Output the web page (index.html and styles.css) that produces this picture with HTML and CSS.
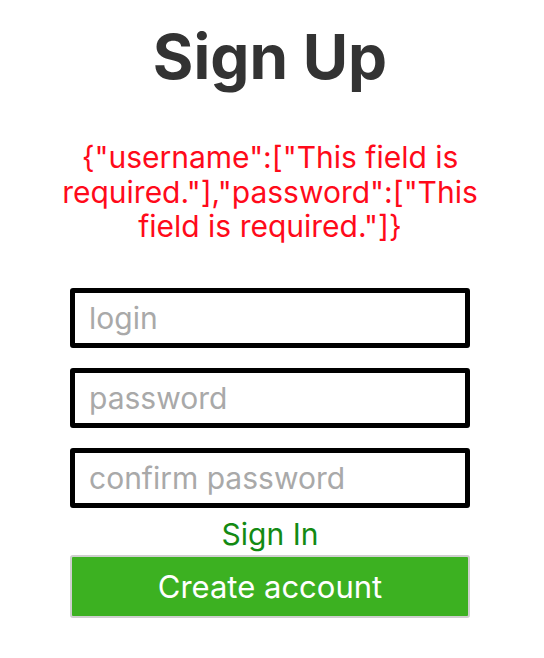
FILE: index.html
```html
<!DOCTYPE html>
<html>
<head>
<meta charset="utf-8">
<link rel="stylesheet" href="styles.css">
</head>
<body>
<div class="page">
  <h1 class="title">Sign Up</h1>
  <p class="error">{"username":["This field is required."],"password":["This field is required."]}</p>
  <form class="form">
    <input class="field" type="text" placeholder="login">
    <input class="field" type="password" placeholder="password">
    <input class="field" type="password" placeholder="confirm password">
    <a class="signin" href="#">Sign In</a>
    <button class="submit" type="button">Create account</button>
  </form>
</div>
</body>
</html>
```

FILE: styles.css
```css
html, body {
  margin: 0;
  padding: 0;
  background: #fff;
}
body {
  font-family: Inter, "Noto Sans", sans-serif;
}
.page {
  width: 540px;
  display: flex;
  flex-direction: column;
  align-items: center;
}
.title {
  margin: 22px 0 0;
  font-size: 62px;
  line-height: 70px;
  font-weight: 700;
  color: #333;
}
.error {
  width: 440px;
  margin: 48px 0 0;
  color: #ff0a1a;
  font-size: 30px;
  line-height: 34.5px;
  text-align: center;
}
.form {
  width: 400px;
  margin-top: 44px;
  display: flex;
  flex-direction: column;
  align-items: center;
}
.field {
  width: 400px;
  height: 60px;
  box-sizing: border-box;
  border: 5px solid #000;
  border-radius: 3px;
  padding: 0 14px;
  margin: 0 0 20px;
  font-family: inherit;
  font-size: 30px;
  color: #333;
  outline: none;
}
.field::placeholder {
  color: #a9a9a9;
}
.signin {
  margin-top: -11px;
  font-size: 30px;
  line-height: 34px;
  color: #138a13;
  text-decoration: none;
}
.submit {
  width: 400px;
  height: 63px;
  margin-top: 4px;
  box-sizing: border-box;
  border: 2px solid #cfcfcf;
  border-radius: 3px;
  background: #3cb121;
  color: #fff;
  font-family: inherit;
  font-size: 31px;
  padding: 0;
}
```
